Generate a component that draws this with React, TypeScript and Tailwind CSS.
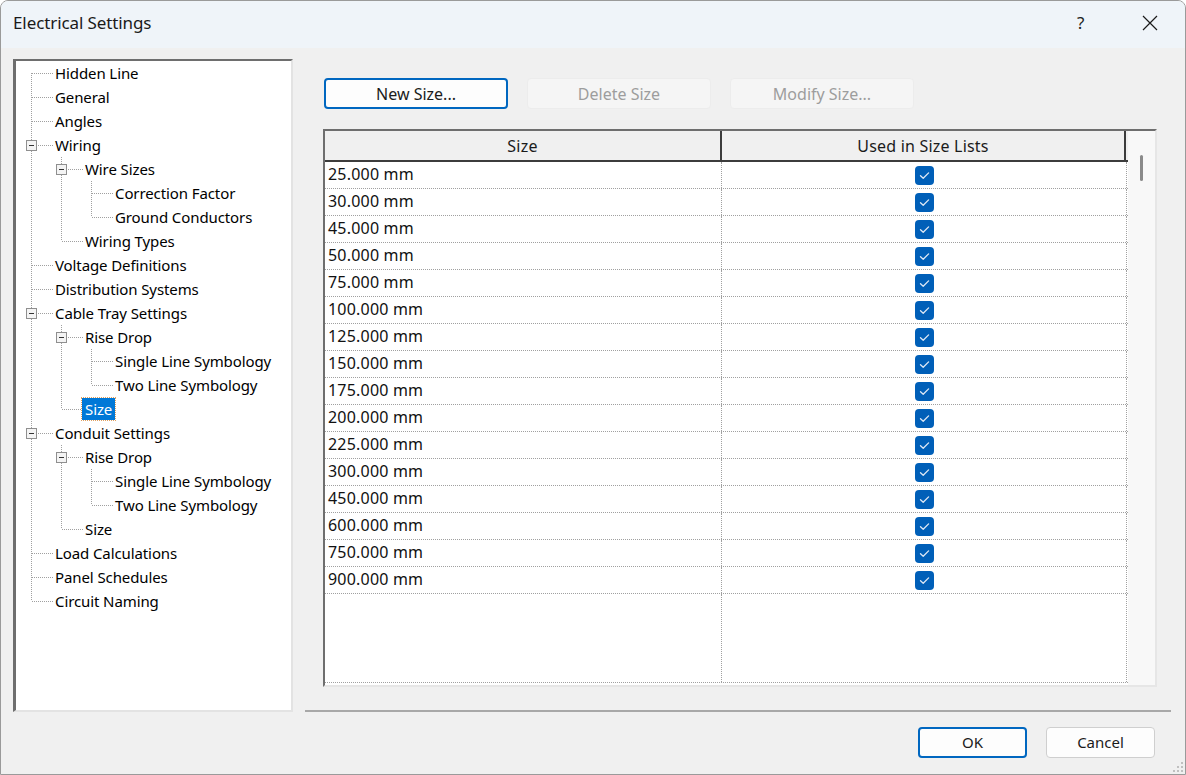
import React from 'react'

type Node = { label: string; level: number; open?: boolean; selected?: boolean }

const tree: Node[] = [
  { label: 'Hidden Line', level: 0 },
  { label: 'General', level: 0 },
  { label: 'Angles', level: 0 },
  { label: 'Wiring', level: 0, open: true },
  { label: 'Wire Sizes', level: 1, open: true },
  { label: 'Correction Factor', level: 2 },
  { label: 'Ground Conductors', level: 2 },
  { label: 'Wiring Types', level: 1 },
  { label: 'Voltage Definitions', level: 0 },
  { label: 'Distribution Systems', level: 0 },
  { label: 'Cable Tray Settings', level: 0, open: true },
  { label: 'Rise Drop', level: 1, open: true },
  { label: 'Single Line Symbology', level: 2 },
  { label: 'Two Line Symbology', level: 2 },
  { label: 'Size', level: 1, selected: true },
  { label: 'Conduit Settings', level: 0, open: true },
  { label: 'Rise Drop', level: 1, open: true },
  { label: 'Single Line Symbology', level: 2 },
  { label: 'Two Line Symbology', level: 2 },
  { label: 'Size', level: 1 },
  { label: 'Load Calculations', level: 0 },
  { label: 'Panel Schedules', level: 0 },
  { label: 'Circuit Naming', level: 0 },
]

const sizes = [
  '25.000 mm', '30.000 mm', '45.000 mm', '50.000 mm', '75.000 mm', '100.000 mm',
  '125.000 mm', '150.000 mm', '175.000 mm', '200.000 mm', '225.000 mm', '300.000 mm',
  '450.000 mm', '600.000 mm', '750.000 mm', '900.000 mm',
]

const font = { fontFamily: '"Segoe UI", "Noto Sans", sans-serif' }

function hasNext(i: number) {
  const lvl = tree[i].level
  for (let j = i + 1; j < tree.length; j++) {
    if (tree[j].level < lvl) return false
    if (tree[j].level === lvl) return true
  }
  return false
}

function ancestor(i: number, level: number) {
  for (let j = i - 1; j >= 0; j--) if (tree[j].level === level) return j
  return -1
}

const DOT = '#a0a0a0'

function Guide({ on }: { on: boolean }) {
  return (
    <svg width="30" height="24" className="shrink-0">
      {on && <line x1="15.5" y1="0" x2="15.5" y2="24" stroke={DOT} strokeDasharray="1 1" />}
    </svg>
  )
}

function Connector({ first, next, open }: { first: boolean; next: boolean; open?: boolean }) {
  return (
    <svg width="42" height="24" className="shrink-0">
      <line x1="15.5" y1={first ? 12 : 0} x2="15.5" y2={next ? 24 : 12} stroke={DOT} strokeDasharray="1 1" />
      <line x1="16" y1="12.5" x2="37" y2="12.5" stroke={DOT} strokeDasharray="1 1" />
      {open !== undefined && (
        <g>
          <rect x="10.5" y="7.5" width="10" height="10" fill="#f4f4f4" stroke="#8f8f8f" />
          <line x1="13" y1="12.5" x2="18" y2="12.5" stroke="#333" />
        </g>
      )}
    </svg>
  )
}

function TreeRow({ node, i }: { node: Node; i: number }) {
  const guides = []
  for (let l = 0; l < node.level; l++) {
    const a = ancestor(i, l)
    guides.push(<Guide key={l} on={a >= 0 && hasNext(a)} />)
  }
  return (
    <div className="flex h-6 items-center">
      {guides}
      <Connector first={i === 0} next={hasNext(i)} open={node.open} />
      <span
        className={`-ml-[6px] px-[3px] leading-[22px] text-[15px] tracking-[-0.1px] whitespace-nowrap ${
          node.selected ? 'bg-[#0078d7] text-white outline outline-1 outline-dotted outline-[#e0a060]' : 'text-[#000]'
        }`}
      >
        {node.label}
      </span>
    </div>
  )
}

function Check() {
  return (
    <svg width="19" height="19" viewBox="0 0 19 19">
      <rect x="0" y="0" width="19" height="19" rx="4" fill="#005fb8" />
      <path d="M5.5 9.8 L8.2 12.3 L13.6 6.9" fill="none" stroke="#dfe9f5" strokeWidth="1.3" strokeLinecap="round" strokeLinejoin="round" />
    </svg>
  )
}

function Btn({ label, primary, disabled, w, size }: { label: string; primary?: boolean; disabled?: boolean; w: string; size: string }) {
  return (
    <div
      className={`${w} ${size} h-[31px] flex items-center justify-center rounded-[4px] ${
        disabled
          ? 'bg-[#f5f5f5] border border-[#ececec] text-[#9d9d9d]'
          : primary
            ? 'bg-[#fdfdfd] border-2 border-[#0067c0] text-[#1b1b1b]'
            : 'bg-[#fdfdfd] border border-[#cfcfcf] text-[#1b1b1b]'
      }`}
    >
      {label}
    </div>
  )
}

export default function App() {
  return (
    <div style={font} className="w-[1186px] h-[775px] bg-[#f0f0f0] border border-[#9a9a9a] rounded-t-[8px] overflow-hidden flex flex-col relative">
      {/* title bar */}
      <div className="h-[47px] shrink-0 bg-[#eff4f9] flex items-center pl-[12px]">
        <span className="text-[17px] text-[#1a1a1a] tracking-[-0.1px] mt-[-4px]">Electrical Settings</span>
        <div className="flex-1" />
        <span className="text-[17px] text-[#222] w-[20px] mr-[45px] mt-[-4px]">?</span>
        <svg width="16" height="16" viewBox="0 0 16 16" className="mr-[27px] mt-[-4px]">
          <path d="M1 1 L15 15 M15 1 L1 15" stroke="#1a1a1a" strokeWidth="1.2" />
        </svg>
      </div>

      <div className="flex pt-[11px]">
        {/* tree */}
        <div className="ml-[12px] w-[280px] h-[653px] bg-white border-t-2 border-l-[3px] border-t-[#6e6e6e] border-l-[#6e6e6e] border-r-2 border-b-2 border-r-[#e3e3e3] border-b-[#e3e3e3]">
          {tree.map((n, i) => (
            <TreeRow key={i} node={n} i={i} />
          ))}
        </div>

        {/* right area */}
        <div className="ml-[12px] w-[866px] h-[653px] flex flex-col border-b-2 border-b-[#a8a8a8] pl-[18px]">
          <div className="flex gap-[19px] pt-[19px] pl-[1px]">
            <Btn label="New Size..." primary w="w-[184px]" size="text-[16px]" />
            <Btn label="Delete Size" disabled w="w-[184px]" size="text-[16px]" />
            <Btn label="Modify Size..." disabled w="w-[184px]" size="text-[16px]" />
          </div>

          <div className="mt-[20px] w-[834px] h-[558px] flex bg-white border-t-2 border-l-2 border-t-[#6e6e6e] border-l-[#6e6e6e] border-r-2 border-b-2 border-r-[#e6e6e6] border-b-[#e6e6e6]">
            <div className="w-[803px] flex flex-col">
              <div className="h-[31px] shrink-0 flex bg-[#f0f0f0] border-b-2 border-b-[#3c3c3c] text-[16px] tracking-[0.2px] text-[#1b1b1b]">
                <div className="w-[397px] flex items-center justify-center border-r-2 border-r-[#3c3c3c]">Size</div>
                <div className="w-[404px] flex items-center justify-center border-r-2 border-r-[#3c3c3c]">Used in Size Lists</div>
              </div>
              <div className="flex-1 flex flex-col">
                {sizes.map((s) => (
                  <div key={s} className="h-[27px] shrink-0 flex border-b border-dotted border-b-[#a0a0a0]">
                    <div className="w-[397px] flex items-center pl-[3px] pb-[2px] text-[16px] tracking-[0.2px] text-[#111] border-r border-dotted border-r-[#a0a0a0]">
                      {s}
                    </div>
                    <div className="w-[405px] flex items-center justify-center border-r border-dotted border-r-[#a0a0a0]">
                      <Check />
                    </div>
                  </div>
                ))}
                <div className="flex-1 flex border-b border-dotted border-b-[#a0a0a0] mb-[2px]">
                  <div className="w-[397px] border-r border-dotted border-r-[#a0a0a0]" />
                  <div className="w-[405px] border-r border-dotted border-r-[#a0a0a0]" />
                </div>
              </div>
            </div>
            {/* scrollbar */}
            <div className="flex-1 bg-[#f8f8f8] flex justify-center pt-[24px]">
              <div className="w-[3px] h-[26px] rounded-full bg-[#8a8a8a]" />
            </div>
          </div>
        </div>
      </div>

      {/* footer buttons */}
      <div className="flex justify-end gap-[19px] pr-[30px] pt-[15px]">
        <Btn label="OK" primary w="w-[109px]" size="text-[15px]" />
        <Btn label="Cancel" w="w-[109px]" size="text-[15px]" />
      </div>

      {/* resize grip */}
      <svg width="12" height="12" viewBox="0 0 12 12" className="absolute right-[1px] bottom-[1px]">
        {[[9, 9], [5, 9], [1, 9], [9, 5], [5, 5], [9, 1]].map(([x, y], k) => (
          <rect key={k} x={x} y={y} width="2" height="2" fill="#c0c0c0" />
        ))}
      </svg>
    </div>
  )
}
